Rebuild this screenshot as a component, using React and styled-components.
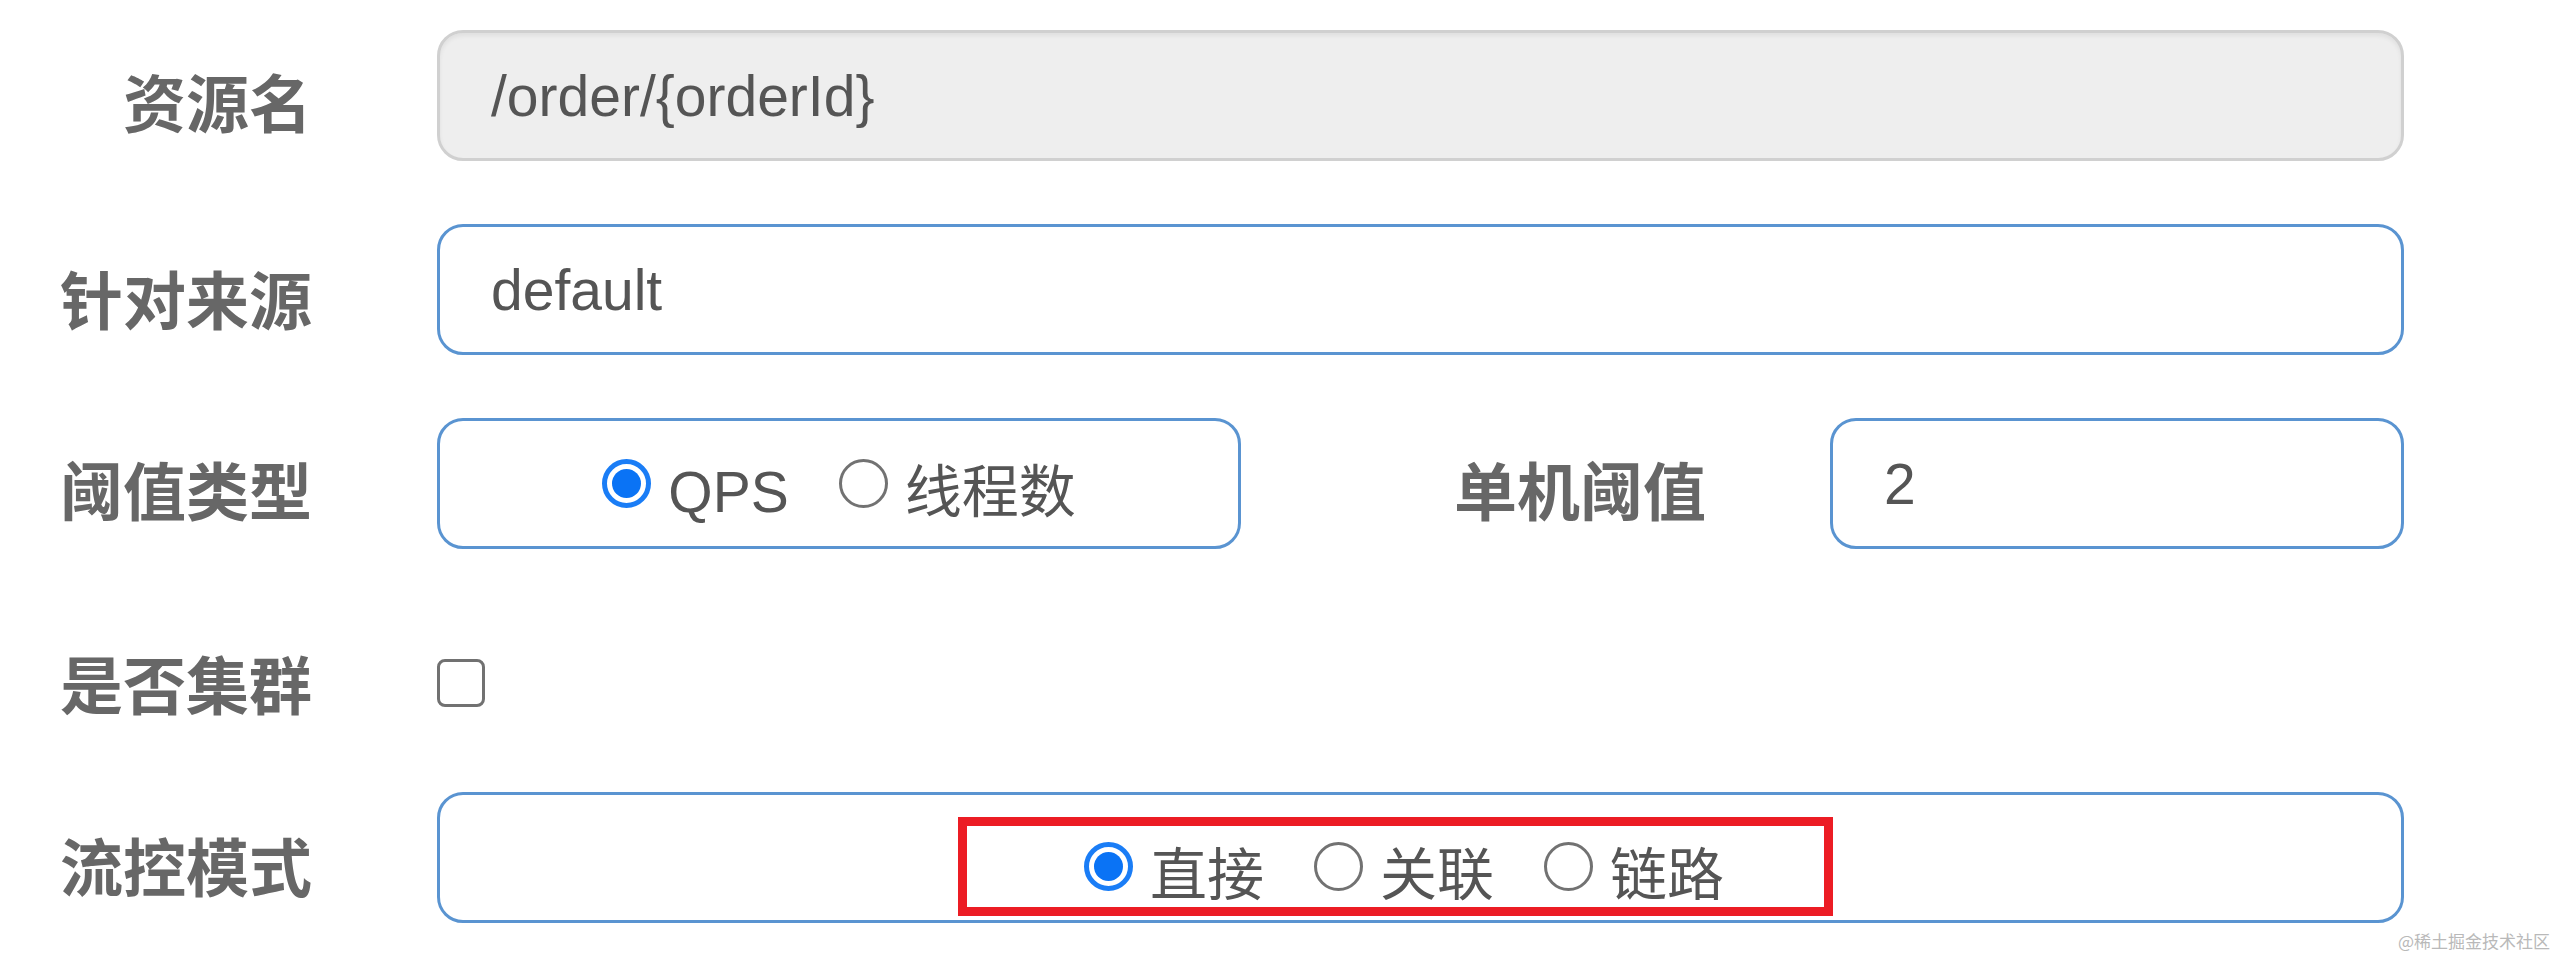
import React from 'react'
import styled, { createGlobalStyle } from 'styled-components'

const GlobalStyle = createGlobalStyle`
  *, *::before, *::after {
    box-sizing: border-box;
  }

  body {
    margin: 0;
    background: #fff;
    font-family: "Liberation Sans", "Noto Sans CJK SC", sans-serif;
  }
`

const FONT = `"Liberation Sans", "Noto Sans CJK SC", sans-serif`
const BLUE = '#5a94d1'

const Page = styled.div`
  position: relative;
  height: 955px;
  overflow: hidden;
`

const Form = styled.div`
  display: flex;
  flex-direction: column;
  gap: 63px;
  padding: 30px 156px 0 0;
`

const Row = styled.div`
  display: flex;
  align-items: center;
  height: ${p => p.$h || 131}px;
`

const Label = styled.div`
  flex-shrink: 0;
  width: ${p => p.$width || 312}px;
  margin-right: ${p => p.$gap || 125}px;
  padding-top: ${p => p.$drop || 0}px;
  text-align: right;
  font-family: ${FONT};
  font-size: 63px;
  font-weight: 700;
  line-height: 1;
  color: #676767;
  white-space: nowrap;
`

const Field = styled.div`
  flex: 1;
  height: 100%;
  display: flex;
  align-items: center;
  padding-left: 51px;
  border: 3px solid ${p => (p.$disabled ? '#d0d0d0' : BLUE)};
  border-radius: 26px;
  background: ${p => (p.$disabled ? '#eeeeee' : '#fff')};
  box-shadow: ${p => (p.$disabled ? 'inset 0 3px 4px rgba(0, 0, 0, 0.06)' : 'none')};
  font-family: ${FONT};
  font-size: 57px;
  color: #555;
`

const RadioBox = styled.div`
  flex-shrink: 0;
  width: 804px;
  height: 100%;
  display: flex;
  align-items: center;
  justify-content: center;
  gap: 50px;
  border: 3px solid ${BLUE};
  border-radius: 26px;
  background: #fff;
`

const ModeBox = styled.div`
  flex: 1;
  height: 100%;
  display: flex;
  align-items: flex-end;
  justify-content: center;
  border: 3px solid ${BLUE};
  border-radius: 26px;
  background: #fff;
`

/* red annotation frame drawn around the mode options */
const Highlight = styled.div`
  height: 99px;
  display: flex;
  align-items: center;
  gap: 50px;
  margin: 0 50px 4px 0;
  padding: 0 100px 0 117px;
  border: 9px solid #ec1c24;
`

const RadioItem = styled.label`
  display: flex;
  align-items: center;
  gap: 17px;
`

const RadioMark = styled.span`
  flex-shrink: 0;
  width: 49px;
  height: 49px;
  border-radius: 50%;
  ${p =>
    p.$checked
      ? `
    border: 5px solid #1a7df6;
    padding: 5px;
    background: #0a73f5;
    background-clip: content-box;
  `
      : `
    border: 3px solid #727272;
    background: #fff;
  `}
`

const RadioText = styled.span`
  padding-top: 18px;
  font-family: ${FONT};
  font-size: 57px;
  line-height: 1;
  color: #555;
  white-space: nowrap;
`

const Checkbox = styled.span`
  width: 48px;
  height: 48px;
  margin-top: 25px;
  border: 3px solid #717171;
  border-radius: 8px;
  background: #fff;
`

const Watermark = styled.div`
  position: absolute;
  right: 10px;
  bottom: 6px;
  font-family: "Noto Sans CJK SC", sans-serif;
  font-size: 17px;
  line-height: 1;
  color: #b9b9b9;
`

const Radio = ({ checked, children }) => (
  <RadioItem>
    <RadioMark $checked={checked} />
    <RadioText>{children}</RadioText>
  </RadioItem>
)

const App = () => (
  <>
    <GlobalStyle />
    <Page>
      <Form>
        <Row>
          <Label $drop={19}>资源名</Label>
          <Field $disabled>/order/{'{orderId}'}</Field>
        </Row>
        <Row>
          <Label $drop={26}>针对来源</Label>
          <Field>default</Field>
        </Row>
        <Row>
          <Label $drop={19}>阈值类型</Label>
          <RadioBox>
            <Radio checked>QPS</Radio>
            <Radio>线程数</Radio>
          </RadioBox>
          <Label $width={465} $gap={124} $drop={19}>单机阈值</Label>
          <Field>2</Field>
        </Row>
        <Row $h={117}>
          <Label $drop={33}>是否集群</Label>
          <Checkbox />
        </Row>
        <Row>
          <Label $drop={24}>流控模式</Label>
          <ModeBox>
            <Highlight>
              <Radio checked>直接</Radio>
              <Radio>关联</Radio>
              <Radio>链路</Radio>
            </Highlight>
          </ModeBox>
        </Row>
      </Form>
      <Watermark>@稀土掘金技术社区</Watermark>
    </Page>
  </>
)

export default App
